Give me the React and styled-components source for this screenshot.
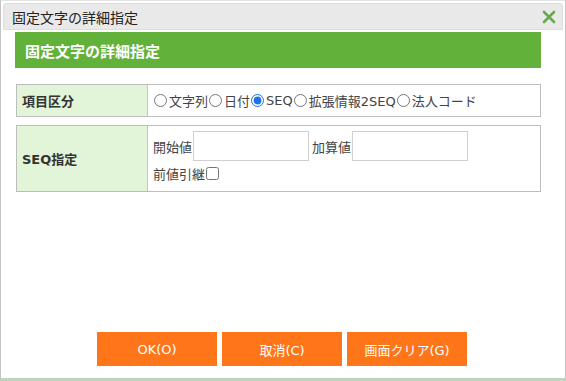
import styled, { createGlobalStyle } from 'styled-components';

const GlobalStyle = createGlobalStyle`
    html, body {
        margin: 0;
        padding: 0;
        background: #ffffff;
    }
    body {
        font-family: "DejaVu Sans", "Noto Sans CJK JP", sans-serif;
        color: #333333;
    }
`

const Dialog = styled.div`
    box-sizing: border-box;
    width: 566px;
    height: 381px;
    border-left: 1px solid #c4c4c4;
    border-right: 1px solid #c4c4c4;
    border-top: 1px solid #e4e4e4;
    border-bottom: 3px solid #bcd5bc;
    padding: 2px 2px 0 2px;
    display: flex;
    flex-direction: column;
`

const TitleBar = styled.div`
    height: 25px;
    background: #e9e9e9;
    border: 1px solid #dddddd;
    border-radius: 3px 3px 0 0;
    display: flex;
    align-items: center;
    justify-content: space-between;
    padding: 0 6px 0 8px;
    font-family: "Noto Sans CJK JP", sans-serif;
    font-size: 14px;
    color: #222222;
`

const Body = styled.div`
    flex: 1;
    display: flex;
    flex-direction: column;
    padding: 2px 22px 0 12px;
`

const Heading = styled.div`
    height: 36px;
    background: #62b13b;
    color: #ffffff;
    font-family: "Noto Sans CJK JP", sans-serif;
    font-size: 15px;
    font-weight: bold;
    display: flex;
    align-items: center;
    padding-left: 10px;
    margin-bottom: 16px;
`

const Table = styled.div`
    display: grid;
    grid-template-columns: 131px 1fr;
    border: 1px solid #bdbdbd;
    margin: 0 0 8px 1px;
    height: ${(p) => p.h}px;
`

const Label = styled.div`
    background: #e3f5d9;
    border-right: 1px solid #c4c4c4;
    font-size: 13px;
    font-weight: bold;
    color: #333333;
    display: flex;
    align-items: center;
    padding-left: 5px;
`

const Cell = styled.div`
    display: flex;
    flex-direction: column;
    justify-content: ${(p) => (p.top ? 'flex-start' : 'center')};
    gap: 3px;
    padding: ${(p) => (p.top ? '5px' : '0')} 5px 0 5px;
    font-size: 13px;
    color: #444444;
`

const Line = styled.div`
    display: flex;
    align-items: center;
    min-height: 18px;
`

const Radio = styled.input.attrs({ type: 'radio', name: 'kbn' })`
    margin: 0 2px 0 1px;
    width: 13px;
    height: 13px;
    accent-color: #1a73e8;
`

const TextBox = styled.input.attrs({ type: 'text' })`
    box-sizing: border-box;
    width: 116px;
    height: 30px;
    border: 1px solid #d0d0d0;
    margin: 0 3px 0 1px;
`

const Check = styled.input.attrs({ type: 'checkbox' })`
    margin: 0 0 0 1px;
    width: 13px;
    height: 13px;
`

const Footer = styled.div`
    margin-top: auto;
    display: flex;
    justify-content: center;
    gap: 5px;
    padding: 0 0 12px 8px;
`

const Button = styled.button`
    width: 120px;
    height: 34px;
    border: none;
    background: #ff7519;
    color: #ffffff;
    font-family: "DejaVu Sans", "Noto Sans CJK JP", sans-serif;
    font-size: 13px;
    cursor: pointer;
`

const Close = () => (
    <svg width="14" height="14" viewBox="0 0 14 14">
        <path d="M2 2 L12 12 M12 2 L2 12" stroke="#6aa84f" strokeWidth="2.6" strokeLinecap="round" />
    </svg>
)

const App = () => {
    return (
        <>
            <GlobalStyle />
            <Dialog>
                <TitleBar>
                    <span>固定文字の詳細指定</span>
                    <Close />
                </TitleBar>
                <Body>
                    <Heading>固定文字の詳細指定</Heading>
                    <Table h={31}>
                        <Label>項目区分</Label>
                        <Cell>
                            <Line>
                                <Radio />文字列
                                <Radio />日付
                                <Radio defaultChecked />SEQ
                                <Radio />拡張情報2SEQ
                                <Radio />法人コード
                            </Line>
                        </Cell>
                    </Table>
                    <Table h={65}>
                        <Label>SEQ指定</Label>
                        <Cell top>
                            <Line>
                                開始値<TextBox />
                                加算値<TextBox />
                            </Line>
                            <Line>
                                前値引継<Check />
                            </Line>
                        </Cell>
                    </Table>
                    <Footer>
                        <Button>OK(O)</Button>
                        <Button>取消(C)</Button>
                        <Button>画面クリア(G)</Button>
                    </Footer>
                </Body>
            </Dialog>
        </>
    )
}

export default App;
